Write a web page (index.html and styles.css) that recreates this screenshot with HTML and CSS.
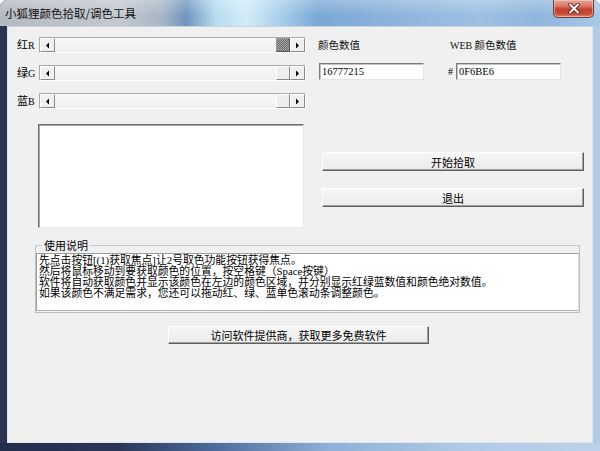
FILE: index.html
```html
<!DOCTYPE html>
<html lang="zh-CN">
<head>
<meta charset="utf-8">
<title>小狐狸颜色拾取/调色工具</title>
<link rel="stylesheet" href="styles.css">
</head>
<body>
<div class="window">
  <div class="titlebar">
    <span class="title">小狐狸颜色拾取/调色工具</span>
    <span class="close">
      <svg width="14" height="11" viewBox="0 0 14 11"><path d="M3 1.5 L11 9.5 M11 1.5 L3 9.5" stroke="#5a1a12" stroke-width="3.6" stroke-linecap="round"/><path d="M3 1.5 L11 9.5 M11 1.5 L3 9.5" stroke="#ffffff" stroke-width="2" stroke-linecap="round"/></svg>
    </span>
  </div>
  <div class="frame">
    <div class="client">
      <div class="sliders">
        <div class="row">
          <span class="lbl">红<span class="lat">R</span></span>
          <div class="sb">
            <span class="sb-btn"><svg width="13" height="13" viewBox="0 0 13 13"><path d="M5 6.5 L8 3.5 L8 9.5 Z" fill="#000"/></svg></span>
            <span class="sb-track"></span>
            <span class="sb-thumb active"></span>
            <span class="sb-btn"><svg width="13" height="13" viewBox="0 0 13 13"><path d="M8 6.5 L5 3.5 L5 9.5 Z" fill="#000"/></svg></span>
          </div>
          <span class="cap cap1">颜色数值</span>
          <span class="cap"><span class="lat">WEB</span> 颜色数值</span>
        </div>
        <div class="row">
          <span class="lbl">绿<span class="lat">G</span></span>
          <div class="sb">
            <span class="sb-btn"><svg width="13" height="13" viewBox="0 0 13 13"><path d="M5 6.5 L8 3.5 L8 9.5 Z" fill="#000"/></svg></span>
            <span class="sb-track"></span>
            <span class="sb-thumb"></span>
            <span class="sb-btn"><svg width="13" height="13" viewBox="0 0 13 13"><path d="M8 6.5 L5 3.5 L5 9.5 Z" fill="#000"/></svg></span>
          </div>
          <span class="field f1">16777215</span>
          <span class="hash">#</span>
          <span class="field f2">0F6BE6</span>
        </div>
        <div class="row">
          <span class="lbl">蓝<span class="lat">B</span></span>
          <div class="sb">
            <span class="sb-btn"><svg width="13" height="13" viewBox="0 0 13 13"><path d="M5 6.5 L8 3.5 L8 9.5 Z" fill="#000"/></svg></span>
            <span class="sb-track"></span>
            <span class="sb-thumb"></span>
            <span class="sb-btn"><svg width="13" height="13" viewBox="0 0 13 13"><path d="M8 6.5 L5 3.5 L5 9.5 Z" fill="#000"/></svg></span>
          </div>
        </div>
      </div>
      <div class="mid">
        <div class="colorbox"></div>
        <div class="actions">
          <button class="btn wide">开始拾取</button>
          <button class="btn wide">退出</button>
        </div>
      </div>
      <fieldset class="group">
        <legend>使用说明</legend>
        <div class="memo">先点击按钮[(1)获取焦点]让2号取色功能按钮获得焦点。<br>然后将鼠标移动到要获取颜色的位置，按空格键（Space按键）<br>软件将自动获取颜色并显示该颜色在左边的颜色区域，并分别显示红绿蓝数值和颜色绝对数值。<br>如果该颜色不满足需求，您还可以拖动红、绿、蓝单色滚动条调整颜色。</div>
      </fieldset>
      <div class="bottom">
        <button class="btn visit">访问软件提供商，获取更多免费软件</button>
      </div>
    </div>
    <div class="bottomedge"></div>
  </div>
</div>
</body>
</html>
```
FILE: styles.css
```css
* { box-sizing: border-box; }
html, body { margin: 0; padding: 0; background: #ffffff; }
body {
  width: 600px;
  height: 451px;
  overflow: hidden;
  font-family: "Liberation Serif", "Noto Sans CJK SC", serif;
  font-size: 11px;
  color: #000;
}
.window {
  width: 600px;
  height: 451px;
  border-radius: 7px 7px 0 0;
  overflow: hidden;
  background-color: #2a3556;
}
.titlebar {
  height: 26px;
  display: flex;
  justify-content: space-between;
  align-items: flex-start;
  padding: 0 6px 0 5px;
  background:
    linear-gradient(to bottom, rgba(255,255,255,0.25), rgba(255,255,255,0) 60%),
    linear-gradient(to right, #b4b9c3 0%, #c4c8cf 20%, #a9b6c6 27%, #6f95c0 31%, #b7dcf0 36%, #d2ecf8 41%, #a6cdea 47%, #7aa8d5 53%, #8cb3dc 65%, #9dc0e3 80%, #8fb6dd 90%, #a8c8e6 100%);
}
.title {
  line-height: 26px;
  font-size: 11.5px;
  color: #111;
  font-family: "Noto Sans CJK SC", sans-serif;
}
.close {
  width: 41px;
  height: 18px;
  display: flex;
  align-items: center;
  justify-content: center;
  border: 1px solid #6d3a36;
  border-top: none;
  border-radius: 0 0 5px 5px;
  background: linear-gradient(to bottom, #e6a99c 0%, #d8786a 35%, #c2412e 55%, #c44c36 80%, #dd8270 100%);
  box-shadow: inset 0 0 0 1px rgba(255,220,210,0.5);
}
.frame {
  height: 425px;
  border-left: 7px solid #2b3552;
  border-right: 7px solid #b4cbe6;
  background-color: #6f8fbc;
}
.bottomedge {
  height: 8px;
  margin: 0 -7px;
  background-color: #6f8fbc;
  background-image: linear-gradient(90deg, #232d4b, #2b375a 20%, #4d6c9c 36%, #8fb1d8 55%, #b1cae6 78%, #bcd2ea);
}
.client {
  width: 586px;
  height: 417px;
  background: #f0f0f0;
  border: 1px solid #dfe5ec;
  border-top-color: #c9d3de;
  display: flex;
  flex-direction: column;
}
.sliders {
  display: flex;
  flex-direction: column;
  gap: 12px;
  padding: 10px 0 0 9px;
}
.row {
  height: 16px;
  display: flex;
  align-items: center;
}
.lbl {
  width: 22px;
  font-family: "Noto Sans CJK SC", sans-serif;
  line-height: 16px;
}
.lat {
  font-family: "Liberation Serif", serif;
  font-size: 10px;
}
.sb {
  width: 267px;
  height: 16px;
  display: flex;
  border: 1px solid;
  border-color: #a9a9a9 #ffffff #ffffff #a9a9a9;
  background: #f4f4f4;
}
.sb-btn {
  width: 15px;
  height: 14px;
  display: flex;
  align-items: center;
  justify-content: center;
  background: #f0f0f0;
  border: 1px solid;
  border-color: #ffffff #8a8a8a #8a8a8a #ffffff;
}
.sb-track {
  flex: 1;
  background: linear-gradient(to bottom, #f8f8f8, #efefef);
}
.sb-thumb {
  width: 14px;
  height: 14px;
  background: #eeeeee;
  border: 1px solid;
  border-color: #ffffff #8a8a8a #8a8a8a #ffffff;
}
.sb-thumb.active {
  background: repeating-conic-gradient(#6b6b6b 0 25%, #a6a6a6 0 50%) 0 0 / 2px 2px;
  border-color: #9a9a9a #555 #555 #9a9a9a;
}
.cap {
  font-family: "Noto Sans CJK SC", sans-serif;
  font-size: 10.5px;
  line-height: 16px;
  color: #111;
}
.cap1 {
  margin-left: 12px;
  width: 132px;
}
.field {
  height: 17px;
  width: 105px;
  margin-top: -3px;
  background: #fff;
  border: 1px solid;
  border-color: #7a7a7a #e4e4e4 #e4e4e4 #7a7a7a;
  box-shadow: inset 1px 1px 0 #c4c4c4;
  font-family: "Liberation Serif", serif;
  font-size: 10.5px;
  line-height: 15px;
  padding-left: 2px;
}
.f1 { margin-left: 13px; }
.hash {
  margin-left: 24px;
  width: 8px;
  font-family: "Liberation Serif", serif;
  font-size: 10px;
  margin-top: -3px;
}
.mid {
  display: flex;
  margin-top: 15px;
  padding-left: 30px;
}
.colorbox {
  width: 266px;
  height: 104px;
  background: #fff;
  border: 1px solid;
  border-color: #6e6e6e #e8e8e8 #e8e8e8 #6e6e6e;
  box-shadow: inset 1px 1px 0 #a8a8a8;
}
.actions {
  margin-left: 18px;
  padding-top: 28px;
  display: flex;
  flex-direction: column;
  gap: 17px;
}
.btn {
  display: block;
  margin: 0;
  padding: 0;
  font-family: "Noto Sans CJK SC", sans-serif;
  font-size: 11px;
  color: #000;
  background: linear-gradient(to bottom, #f6f6f6, #ebebeb);
  border: 1px solid;
  border-color: #ffffff #5f5f5f #5f5f5f #ffffff;
  box-shadow: inset -1px -1px 0 #a0a0a0;
  line-height: 16px;
}
.wide {
  width: 262px;
  height: 19px;
}
.group {
  margin: 11px 0 0 27px;
  width: 545px;
  height: 74px;
  padding: 0 1px 1px 1px;
  border: 1px solid #b9c0c8;
  border-top-color: #c4cad1;
  min-inline-size: 0;
}
.group legend {
  font-family: "Noto Sans CJK SC", sans-serif;
  font-size: 11px;
  line-height: 12px;
  padding: 0 2px;
  margin-left: 5px;
}
.memo {
  margin-top: 2px;
  margin-left: -1px;
  margin-right: -1px;
  height: 58px;
  background: #fff;
  border: 1px solid;
  border-color: #9e9e9e #dcdcdc #b0b0b0 #9e9e9e;
  font-family: "Liberation Serif", "Noto Sans CJK SC", serif;
  font-size: 10.8px;
  line-height: 11px;
  padding: 1px 0 0 2px;
  white-space: nowrap;
  overflow: hidden;
}
.bottom {
  margin-top: 13px;
  padding-left: 160px;
}
.visit {
  width: 261px;
  height: 18px;
}
```
